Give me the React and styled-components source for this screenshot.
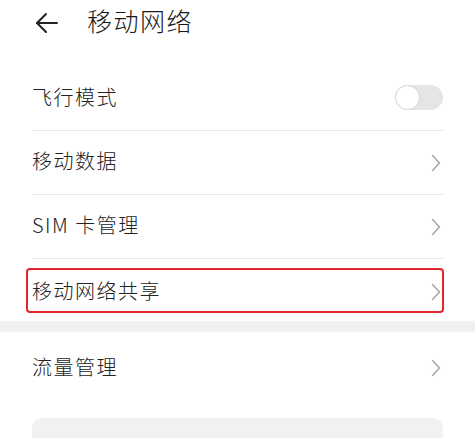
import styled, { createGlobalStyle } from "styled-components";

const GlobalStyle = createGlobalStyle`
    html, body {
        margin: 0;
        padding: 0;
        background: #ffffff;
    }
    body {
        font-family: "Noto Sans CJK SC", "Noto Sans", sans-serif;
        color: #222;
    }
`

export default function App () {
    return (
        <Page>
            <GlobalStyle />
            <Header>
                <BackButton>
                    <svg width="24" height="22" viewBox="0 0 24 22" fill="none" stroke="#222" strokeWidth="2" strokeLinecap="round" strokeLinejoin="round">
                        <path d="M22 11H2" />
                        <path d="M11 2L2 11l9 9" />
                    </svg>
                </BackButton>
                <Title>移动网络</Title>
            </Header>

            <Group>
                <Row>
                    <Label>飞行模式</Label>
                    <Toggle><Knob /></Toggle>
                </Row>
                <Row>
                    <Label>移动数据</Label>
                    <Chevron />
                </Row>
                <Row>
                    <Label>SIM 卡管理</Label>
                    <Chevron />
                </Row>
                <Row height={62} shift={4} last>
                    <Label>移动网络共享</Label>
                    <Chevron />
                    <Highlight />
                </Row>
            </Group>

            <Separator />

            <Group>
                <Row height={70} shift={2} last>
                    <Label>流量管理</Label>
                    <Chevron />
                </Row>
            </Group>

            <Card />
        </Page>
    )
}

function Chevron () {
    return (
        <ChevronBox>
            <svg width="10" height="18" viewBox="0 0 10 18" fill="none" stroke="#a6a6a6" strokeWidth="1.5" strokeLinecap="round" strokeLinejoin="round">
                <path d="M1.5 1.5L8.5 9l-7 7.5" />
            </svg>
        </ChevronBox>
    )
}

const Page = styled.div`
    width: 475px;
    height: 438px;
    overflow: hidden;
    background: #ffffff;
`

const Header = styled.div`
    height: 67px;
    display: flex;
    align-items: center;
    padding-left: 35px;
    box-sizing: border-box;
    padding-bottom: 23px;
`

const BackButton = styled.div`
    width: 24px;
    height: 22px;
    display: flex;
    margin-right: 28px;
    margin-top: 1px;
`

const Title = styled.h1`
    margin: 0 0 4px;
    font-size: 25px;
    font-weight: 300;
    letter-spacing: 1.5px;
    line-height: 1;
    color: #1a1a1a;
`

const Group = styled.div`
    padding: 0 32px;
`

const Row = styled.div`
    position: relative;
    height: ${props => props.height || 64}px;
    padding-top: ${props => props.shift || 0}px;
    display: flex;
    align-items: center;
    justify-content: space-between;
    border-bottom: ${props => props.last ? "none" : "1px solid #e6e6e6"};
    box-sizing: border-box;
`

const Label = styled.span`
    font-size: 20px;
    font-weight: 300;
    line-height: 1;
    letter-spacing: 1.5px;
    color: #222;
    margin-bottom: 3px;
`

const ChevronBox = styled.div`
    display: flex;
    margin-right: 2px;
`

const Toggle = styled.div`
    width: 48px;
    height: 25px;
    border-radius: 13px;
    background: #e5e5e5;
    display: flex;
    align-items: center;
    margin-bottom: 3px;
`

const Knob = styled.div`
    width: 23px;
    height: 23px;
    border-radius: 50%;
    background: #ffffff;
    border: 1px solid #d6d6d6;
`

const Highlight = styled.div`
    position: absolute;
    left: -6px;
    right: -1px;
    top: 9px;
    bottom: 8px;
    border: 2.5px solid #e3262b;
    border-radius: 4px;
    pointer-events: none;
`

const Separator = styled.div`
    height: 11px;
    background: #f1f1f1;
`

const Card = styled.div`
    margin: 16px 32px 0;
    height: 60px;
    border-radius: 10px;
    background: #f1f1f1;
`
